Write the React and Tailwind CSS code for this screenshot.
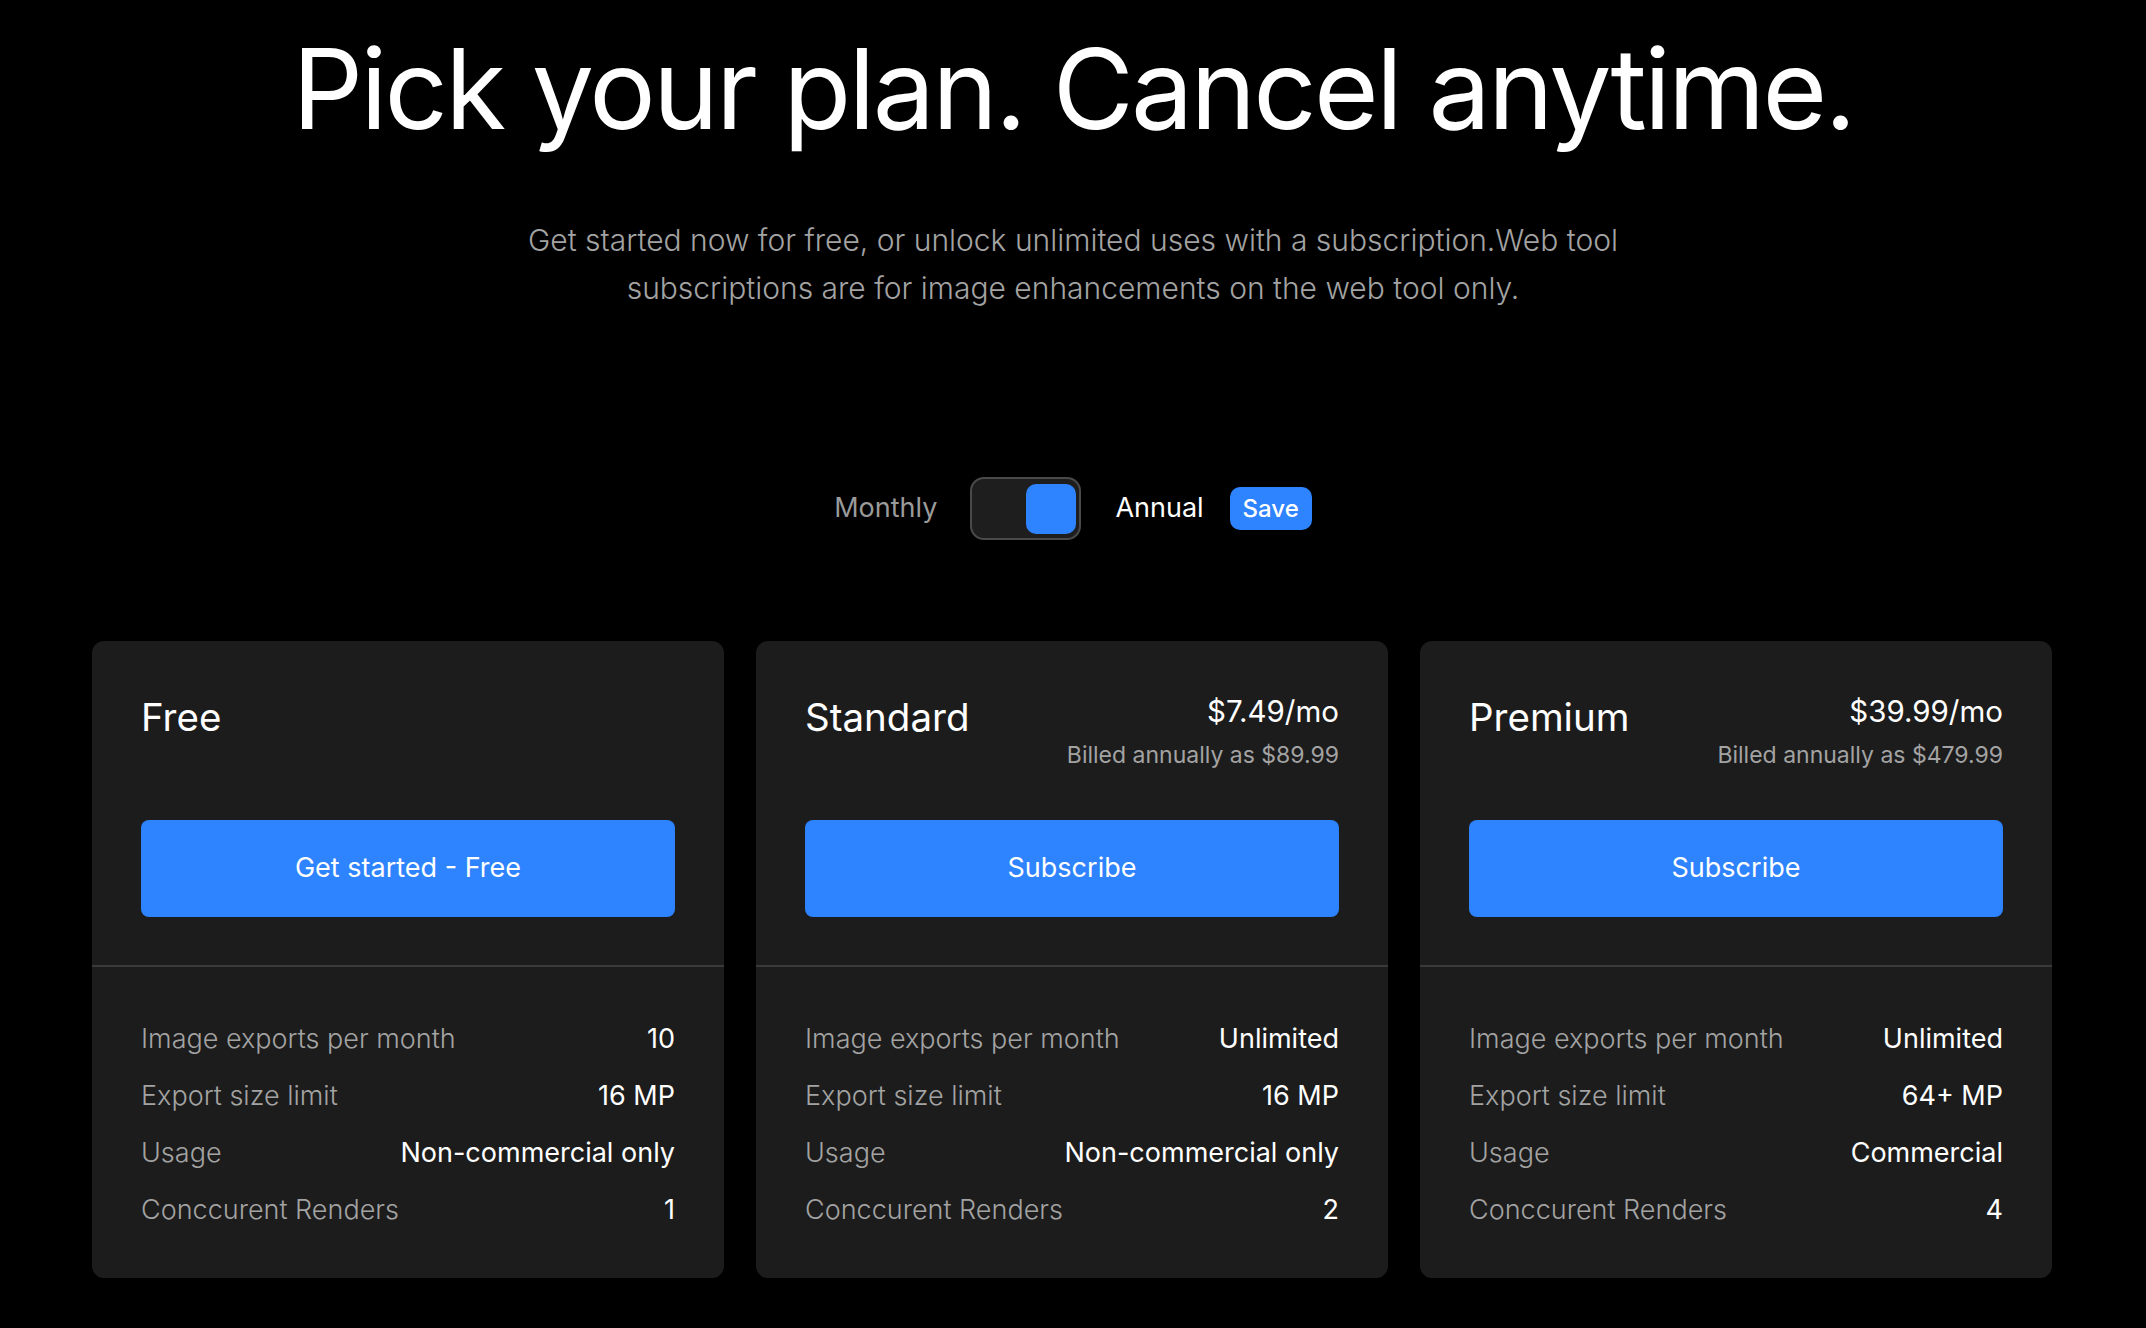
const plans = [
  {
    name: "Free",
    cta: "Get started - Free",
    features: [
      ["Image exports per month", "10"],
      ["Export size limit", "16 MP"],
      ["Usage", "Non-commercial only"],
      ["Conccurent Renders", "1"],
    ],
  },
  {
    name: "Standard",
    price: "$7.49/mo",
    billed: "Billed annually as $89.99",
    cta: "Subscribe",
    features: [
      ["Image exports per month", "Unlimited"],
      ["Export size limit", "16 MP"],
      ["Usage", "Non-commercial only"],
      ["Conccurent Renders", "2"],
    ],
  },
  {
    name: "Premium",
    price: "$39.99/mo",
    billed: "Billed annually as $479.99",
    cta: "Subscribe",
    features: [
      ["Image exports per month", "Unlimited"],
      ["Export size limit", "64+ MP"],
      ["Usage", "Commercial"],
      ["Conccurent Renders", "4"],
    ],
  },
];

function PlanCard({ plan }) {
  return (
    <div className="rounded-[12px] bg-[#1c1c1c] overflow-hidden">
      <div className="px-[49px] pt-[50px] pb-[48px]">
        <div className="flex justify-between items-start h-[129px]">
          <div className="text-[38.5px] leading-[52px] text-white">{plan.name}</div>
          {plan.price && (
            <div className="text-right">
              <div className="text-[29.5px] leading-[40px] text-white">{plan.price}</div>
              <div className="mt-[4px] text-[23px] leading-[40px] text-[#a3a3a3]">{plan.billed}</div>
            </div>
          )}
        </div>
        <button className="w-full h-[97px] rounded-[8px] bg-[#2e83fe] text-[27px] text-white">
          {plan.cta}
        </button>
      </div>
      <div className="border-t-2 border-[#3a3a3a] px-[49px] pt-[52px] pb-[48px] flex flex-col gap-[17px]">
        {plan.features.map(([label, value]) => (
          <div key={label} className="flex justify-between items-center h-[40px] text-[27px]">
            <span className="font-light text-[#a3a3a3]">{label}</span>
            <span className="text-white">{value}</span>
          </div>
        ))}
      </div>
    </div>
  );
}

export default function App() {
  return (
    <div className="min-h-screen bg-black text-white font-['Inter','Liberation_Sans',sans-serif] pb-[52px]">
      <h1 className="pt-[24px] text-center text-[111px] leading-[130px] font-normal tracking-[-0.025em]">
        Pick your plan. Cancel anytime.
      </h1>
      <p className="mx-auto mt-[62px] w-[1140px] text-center text-[30px] leading-[48px] font-light text-[#a3a3a3]">
        Get started now for free, or unlock unlimited uses with a subscription.Web tool subscriptions are for image enhancements on the web tool only.
      </p>
      <div className="mt-[165px] flex items-center justify-center">
        <span className="text-[27px] text-[#9a9a9a]">Monthly</span>
        <div className="ml-[33px] w-[111px] h-[63px] rounded-[14px] border-2 border-[#4a4a4a] bg-[#1e1e1e] flex items-center justify-end pr-[3px]">
          <div className="w-[50px] h-[50px] rounded-[10px] bg-[#2e83fe]" />
        </div>
        <span className="ml-[34px] text-[27px] text-white">Annual</span>
        <span className="ml-[26px] h-[43px] px-[13px] rounded-[10px] bg-[#2e83fe] text-[24px] font-medium text-white flex items-center">
          Save
        </span>
      </div>
      <div className="mt-[101px] pl-[92px] pr-[94px] grid grid-cols-3 gap-[32px]">
        {plans.map((p) => (
          <PlanCard key={p.name} plan={p} />
        ))}
      </div>
    </div>
  );
}
